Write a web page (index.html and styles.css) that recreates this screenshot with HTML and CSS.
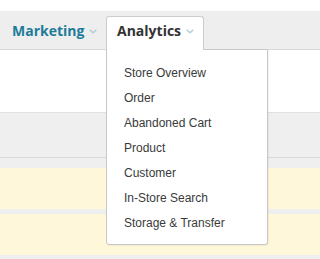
FILE: index.html
```html
<!DOCTYPE html>
<html>
<head>
<meta charset="utf-8">
<link rel="stylesheet" href="styles.css">
</head>
<body>
<div class="page">
  <div class="topgap"></div>
  <nav class="navbar">
    <div class="nav-item">
      <span class="nav-label marketing">Marketing</span>
      <svg class="chev" width="8" height="5" viewBox="0 0 8 5"><polyline points="0.7,0.7 4,3.8 7.3,0.7" fill="none" stroke="#b4ccd3" stroke-width="1.4"/></svg>
    </div>
    <div class="nav-tab">
      <span class="nav-label active">Analytics</span>
      <svg class="chev" width="8" height="5" viewBox="0 0 8 5"><polyline points="0.7,0.7 4,3.8 7.3,0.7" fill="none" stroke="#b4ccd3" stroke-width="1.4"/></svg>
    </div>
    <ul class="dropdown">
      <li>Store Overview</li>
      <li>Order</li>
      <li>Abandoned Cart</li>
      <li>Product</li>
      <li>Customer</li>
      <li>In-Store Search</li>
      <li>Storage &amp; Transfer</li>
    </ul>
  </nav>
  <div class="content">
    <div class="blank"></div>
    <div class="head-row"></div>
    <div class="strip"></div>
    <div class="row-yellow"></div>
    <div class="row-gap"></div>
    <div class="row-yellow"></div>
    <div class="row-gap"></div>
  </div>
</div>
</body>
</html>
```

FILE: styles.css
```css
html, body {
  margin: 0;
  padding: 0;
  background: #ffffff;
}

.page {
  height: 259px;
  overflow: hidden;
}

.topgap {
  height: 11px;
}

.navbar {
  position: relative;
  display: flex;
  align-items: stretch;
  box-sizing: border-box;
  height: 39px;
  padding-top: 5px;
  background: #eeeeee;
  border-bottom: 1px solid #d9d9d9;
}

.nav-item {
  display: flex;
  align-items: flex-start;
  padding: 5px 0 0 12px;
  width: 94px;
}

.nav-label {
  font-family: "Open Sans", "DejaVu Sans", sans-serif;
  font-weight: 700;
  font-size: 14px;
  line-height: 19px;
}

.marketing {
  color: #1d7c99;
}

.active {
  color: #333333;
}

.chev {
  margin: 8px 0 0 5px;
  display: block;
}

.nav-tab {
  position: relative;
  z-index: 2;
  display: flex;
  align-items: flex-start;
  margin-bottom: -1px;
  padding: 4px 9px 0 10px;
  background: #ffffff;
  border: 1px solid #cccccc;
  border-bottom: none;
  border-radius: 3px 3px 0 0;
}

.dropdown {
  position: absolute;
  z-index: 1;
  left: 106px;
  top: 38px;
  box-sizing: border-box;
  width: 162px;
  height: 196px;
  margin: 0;
  padding: 11px 0 0 17px;
  list-style: none;
  background: #ffffff;
  border: 1px solid #c8c8c8;
  border-radius: 0 0 3px 3px;
  box-shadow: 1px 1px 1px rgba(0, 0, 0, 0.05);
}

.dropdown li {
  font-family: "Liberation Sans", Arial, sans-serif;
  font-size: 12px;
  line-height: 25px;
  color: #3a3a3a;
}

.content {
  display: flex;
  flex-direction: column;
}

.blank {
  height: 62px;
  background: #ffffff;
}

.head-row {
  height: 44px;
  background: #efefef;
  border-top: 1px solid #e0e0e0;
  border-bottom: 1px solid #d8d8d8;
}

.strip {
  height: 10px;
  background: #efefef;
}

.row-yellow {
  height: 41px;
  background: #fef7da;
}

.row-gap {
  height: 5px;
  background: #efefef;
}
```
